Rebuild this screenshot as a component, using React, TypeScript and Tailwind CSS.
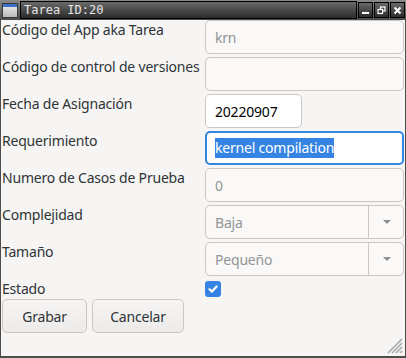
import React from "react";

const labelCls = "text-[14px] leading-[18px] tracking-[-0.2px] text-[#2e3436] whitespace-nowrap pt-[1px]";
const entryDisabled =
  "h-[34px] rounded-[5px] border border-[#cdc7c2] bg-[#faf9f8] flex items-center pl-[9px] text-[14px] tracking-[-0.2px] text-[#929595]";

function Arrow() {
  return (
    <svg width="10" height="6" viewBox="0 0 10 6">
      <path d="M1 1 L9 1 L5 5 Z" fill="#8b8e8f" />
    </svg>
  );
}

function Combo({ value }: { value: string }) {
  return (
    <div className="h-[34px] rounded-[5px] border border-[#cdc7c2] bg-[#faf9f8] flex items-stretch text-[14px] tracking-[-0.2px] text-[#929595]">
      <div className="flex-1 flex items-center pl-[9px]">{value}</div>
      <div className="w-[35px] border-l border-[#cdc7c2] flex items-center justify-center pl-[2px]">
        <Arrow />
      </div>
    </div>
  );
}

export default function App() {
  return (
    <div
      className="w-[406px] h-[358px] bg-[#4d4d4d] flex flex-col overflow-hidden"
      style={{ fontFamily: '"Noto Sans", "Open Sans", sans-serif' }}
    >
      {/* Title bar */}
      <div className="h-[20px] flex items-center gap-[1px] px-[1px] bg-gradient-to-b from-[#8a8a8a] to-[#4a4a4a]">
        <div className="w-[18px] h-[18px] flex items-center justify-center">
          <div className="w-[16px] h-[15px] border border-[#3a3a3a] flex flex-col bg-gradient-to-b from-[#f2f2f2] to-[#b8b8b8]">
            <div className="h-[3px] bg-[#3f6fc4]" />
          </div>
        </div>
        <div
          className="flex-1 h-[18px] border border-black bg-gradient-to-b from-[#6a6a6a] to-[#2c2c2c] text-[#e6e6e6] text-[12px] leading-[16px] pl-[3px]"
          style={{ fontFamily: '"DejaVu Sans Mono", monospace' }}
        >
          Tarea ID:20
        </div>
        <div className="flex gap-[1px]">
          {["min", "max", "close"].map((k) => (
            <div
              key={k}
              className="w-[15px] h-[16px] border border-black bg-gradient-to-b from-[#6a6a6a] to-[#2c2c2c] flex items-center justify-center"
            >
              <svg width="9" height="9" viewBox="0 0 9 9">
                {k === "min" && <rect x="1" y="6" width="7" height="2" fill="#ffffff" />}
                {k === "max" && (
                  <g fill="none" stroke="#ffffff" strokeWidth="1.2">
                    <rect x="3.5" y="1" width="4.5" height="4" />
                    <rect x="1" y="3.5" width="4.5" height="4" fill="#3c3c3c" />
                  </g>
                )}
                {k === "close" && (
                  <path d="M1.5 1.5 L7.5 7.5 M7.5 1.5 L1.5 7.5" stroke="#ffffff" strokeWidth="2" />
                )}
              </svg>
            </div>
          ))}
        </div>
      </div>

      {/* Content */}
      <div className="flex-1 mx-[1px] mb-[2px] bg-[#f6f5f4] relative">
        <div className="grid grid-cols-[203px_1fr] gap-y-[3px] pl-[1px] pr-[1px]">
          <div className={labelCls}>Código del App aka Tarea</div>
          <div className={entryDisabled}>krn</div>

          <div className={labelCls}>Código de control de versiones</div>
          <div className={entryDisabled}></div>

          <div className={labelCls}>Fecha de Asignación</div>
          <div>
            <div className="w-[97px] h-[34px] rounded-[5px] border border-[#cdc7c2] bg-white flex items-center pl-[9px] text-[14px] tracking-[-0.2px] text-[#000000]">
              20220907
            </div>
          </div>

          <div className={labelCls}>Requerimiento</div>
          <div className="h-[34px] rounded-[5px] border-2 border-[#3584e4] bg-white flex items-center pl-[8px] text-[14px] tracking-[-0.2px]">
            <span className="bg-[#3584e4] text-white leading-[20px]">kernel compilation</span>
          </div>

          <div className={labelCls}>Numero de Casos de Prueba</div>
          <div className={entryDisabled}>0</div>

          <div className={labelCls}>Complejidad</div>
          <Combo value="Baja" />

          <div className={labelCls}>Tamaño</div>
          <Combo value="Pequeño" />

          <div className={labelCls}>Estado</div>
          <div className="pt-[2px] h-[20px]">
            <div className="w-[16px] h-[16px] rounded-[3px] bg-[#3584e4] flex items-center justify-center">
              <svg width="12" height="12" viewBox="0 0 12 12">
                <path d="M2.5 6.2 L5 8.6 L9.6 3.4" fill="none" stroke="#ffffff" strokeWidth="2.2" strokeLinecap="round" strokeLinejoin="round" />
              </svg>
            </div>
          </div>
        </div>

        <div className="flex gap-[5px] pl-[1px] mt-[0px]">
          <button className="w-[85px] h-[34px] rounded-[5px] border border-[#cdc7c2] bg-gradient-to-b from-[#f6f5f4] to-[#edebe9] text-[14px] tracking-[-0.2px] text-[#2e3436]">
            Grabar
          </button>
          <button className="w-[92px] h-[34px] rounded-[5px] border border-[#cdc7c2] bg-gradient-to-b from-[#f6f5f4] to-[#edebe9] text-[14px] tracking-[-0.2px] text-[#2e3436]">
            Cancelar
          </button>
        </div>

        <svg className="absolute right-[2px] bottom-[2px]" width="18" height="18" viewBox="0 0 18 18">
          <g stroke="#a8a8a8" strokeWidth="1.6">
            <line x1="17" y1="3" x2="3" y2="17" />
            <line x1="17" y1="7" x2="7" y2="17" />
            <line x1="17" y1="11" x2="11" y2="17" />
            <line x1="17" y1="15" x2="15" y2="17" />
          </g>
        </svg>
      </div>
    </div>
  );
}
